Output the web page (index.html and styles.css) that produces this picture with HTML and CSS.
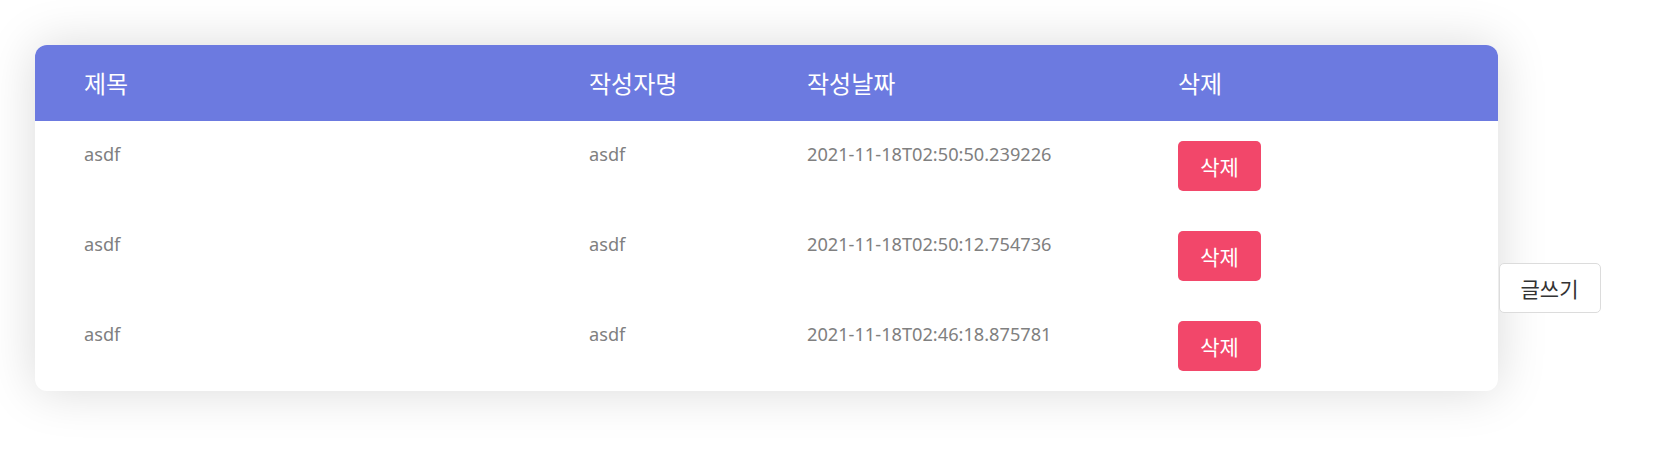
FILE: index.html
```html
<!DOCTYPE html>
<html lang="ko">
<head>
<meta charset="utf-8">
<title>게시판</title>
<link rel="stylesheet" href="styles.css">
</head>
<body>
<div class="page">
  <div class="board">
    <table class="board-table">
      <colgroup>
        <col class="col-title">
        <col class="col-author">
        <col class="col-date">
        <col class="col-del">
      </colgroup>
      <thead>
        <tr class="head-row">
          <th class="cell-first">제목</th>
          <th>작성자명</th>
          <th>작성날짜</th>
          <th>삭제</th>
        </tr>
      </thead>
      <tbody>
        <tr class="body-row">
          <td class="cell-first">asdf</td>
          <td>asdf</td>
          <td>2021-11-18T02:50:50.239226</td>
          <td><button class="btn-delete">삭제</button></td>
        </tr>
        <tr class="body-row">
          <td class="cell-first">asdf</td>
          <td>asdf</td>
          <td>2021-11-18T02:50:12.754736</td>
          <td><button class="btn-delete">삭제</button></td>
        </tr>
        <tr class="body-row">
          <td class="cell-first">asdf</td>
          <td>asdf</td>
          <td>2021-11-18T02:46:18.875781</td>
          <td><button class="btn-delete">삭제</button></td>
        </tr>
      </tbody>
    </table>
  </div>
  <button class="btn-write">글쓰기</button>
</div>
</body>
</html>
```

FILE: styles.css
```css
html, body {
  margin: 0;
  padding: 0;
  background: #ffffff;
}

body {
  font-family: "Noto Sans", "Noto Sans CJK KR", sans-serif;
}

.page {
  display: flex;
  align-items: flex-start;
  box-sizing: border-box;
  min-height: 458px;
  padding: 45px 0 0 35px;
}

.board {
  width: 1462.5px;
  flex: none;
  background: #ffffff;
  border-radius: 12px;
  overflow: hidden;
  box-shadow: 0 0 50px 0 rgba(0, 0, 0, 0.15);
}

.board-table {
  width: 100%;
  border-collapse: collapse;
  table-layout: fixed;
}

.col-title { width: 554px; }
.col-author { width: 218px; }
.col-date { width: 371px; }

.head-row th {
  background: #6c7ae0;
  color: #ffffff;
  font-family: "Noto Sans CJK KR", "Noto Sans", sans-serif;
  font-weight: 400;
  font-size: 24px;
  line-height: 31.5px;
  text-align: left;
  padding: 22px 0;
}

.body-row td {
  color: #808080;
  font-size: 18.2px;
  line-height: 26px;
  text-align: left;
  vertical-align: top;
  padding: 20px 0;
}

.head-row .cell-first,
.body-row .cell-first {
  padding-left: 49px;
}

.btn-delete {
  display: block;
  width: 83px;
  height: 50px;
  border: none;
  border-radius: 5px;
  background: #f2476a;
  color: #ffffff;
  font-family: "Noto Sans CJK KR", "Noto Sans", sans-serif;
  font-size: 21px;
  padding: 0;
  cursor: pointer;
}

.btn-write {
  flex: none;
  margin-top: 217.5px;
  margin-left: 1px;
  width: 102px;
  height: 50px;
  background: #ffffff;
  border: 1px solid #dcdcdc;
  border-radius: 5px;
  color: #333333;
  font-family: "Noto Sans CJK KR", "Noto Sans", sans-serif;
  font-size: 21px;
  padding: 0;
  cursor: pointer;
}
```
